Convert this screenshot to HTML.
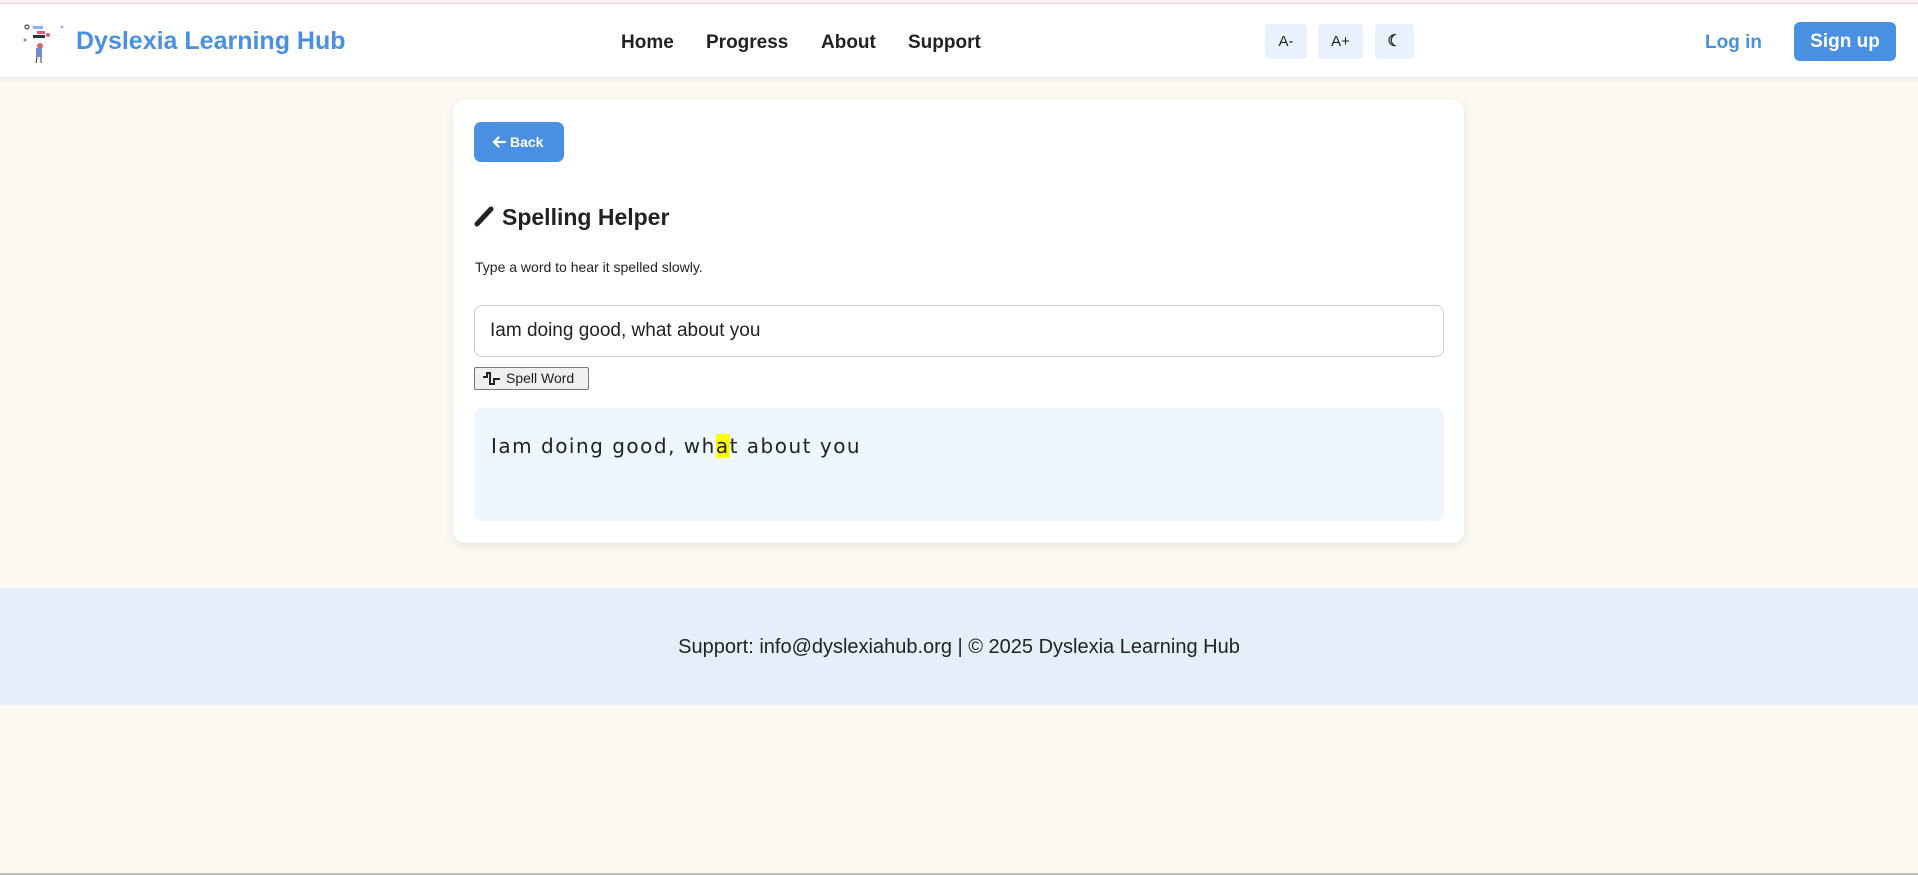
<!DOCTYPE html>
<html><head><meta charset="utf-8"><style>
*{box-sizing:border-box;margin:0;padding:0}
body{width:1918px;height:875px;background:#fdfaf4;font-family:"Liberation Sans",Arial,sans-serif;color:#222;position:relative;overflow:hidden}
.top{position:absolute;left:0;top:0;width:1918px;height:4px;background:#f8eef8;border-bottom:1px solid #eadcea}
header{position:absolute;left:0;top:5px;width:1918px;height:72px;background:#fff;box-shadow:0 2px 6px rgba(0,0,0,.08)}
.logo{position:absolute;left:76px;top:22px;font-size:25px;font-weight:bold;color:#4a90e2}
nav a{position:absolute;top:27px;font-size:19px;font-weight:bold;color:#222;text-decoration:none}
.sb{position:absolute;top:19px;height:35px;background:#e8f1fd;border-radius:4px;font-size:15px;text-align:center;line-height:35px;color:#222}
.login{position:absolute;left:1705px;top:27px;font-size:19px;font-weight:bold;color:#4a90e2}
.signup{position:absolute;left:1794px;top:17px;width:102px;height:39px;background:#4a90e2;color:#fff;border-radius:6px;font-size:19px;font-weight:bold;text-align:center;line-height:39px}
.card{position:absolute;left:453px;top:100px;width:1011px;height:443px;background:#fff;border-radius:12px;box-shadow:0 3px 10px rgba(0,0,0,.1)}
.back{position:absolute;left:21px;top:22px;width:90px;height:40px;background:#4a90e2;border-radius:7px;color:#fff;font-size:14px;font-weight:bold;line-height:40px;padding-left:36px}
h2{position:absolute;left:21px;top:104px;font-size:23px;font-weight:bold}
.desc{position:absolute;left:22px;top:159px;font-size:14px}
.inp{position:absolute;left:21px;top:205px;width:970px;height:52px;border:1px solid #ccc;border-radius:8px;font-size:19px;padding-left:15px;line-height:50px}
.spell{position:absolute;left:21px;top:267px;width:115px;height:23px;border:1px solid #777;background:#efefef;border-radius:2px;font-size:14px;line-height:21px;padding-left:31px}
.out{position:absolute;left:21px;top:308px;width:970px;height:113px;background:#eef6fe;border-radius:8px;font-family:"DejaVu Sans",sans-serif;font-size:20px;letter-spacing:1.5px;padding:26px 0 0 17px;color:#222}
.hl{background:#ffff00}
footer{position:absolute;left:0;top:588px;width:1918px;height:117px;background:#e5eff9;text-align:center;font-size:20px;line-height:119px}
.bl{position:absolute;left:0;top:873px;width:1918px;height:2px;background:#bbb}
</style></head><body>
<div class="top"></div>
<header>
<svg style="position:absolute;left:22px;top:16px" width="44" height="44" viewBox="0 0 44 44"><circle cx="5" cy="6" r="2" fill="none" stroke="#222"/><rect x="11" y="5" width="10" height="3" fill="#8fb3f0"/><rect x="15" y="10" width="8" height="3" fill="#e06070"/><rect x="11" y="14" width="12" height="3" fill="#333"/><circle cx="26" cy="14" r="2" fill="#e06070"/><circle cx="18" cy="25" r="3" fill="#e06070"/><rect x="14" y="27" width="6" height="9" fill="#6a8fd0"/><line x1="15" y1="36" x2="14" y2="42" stroke="#334"/><line x1="19" y1="36" x2="19" y2="42" stroke="#334"/><circle cx="3" cy="19" r="1.5" fill="#6a8fd0"/><circle cx="40" cy="6" r="1.5" fill="#8fb3f0"/></svg>
<div class="logo">Dyslexia Learning Hub</div>
<nav><a style="left:621px">Home</a><a style="left:706px">Progress</a><a style="left:821px">About</a><a style="left:908px">Support</a></nav>
<div class="sb" style="left:1265px;width:42px">A-</div>
<div class="sb" style="left:1318px;width:45px">A+</div>
<div class="sb" style="left:1375px;width:39px;font-size:16px;font-weight:bold">☾</div>
<div class="login">Log in</div>
<div class="signup">Sign up</div>
</header>
<div class="card">
<div class="back"><svg style="position:absolute;left:18px;top:14px" width="14" height="12" viewBox="0 0 14 12"><path d="M13 6 H2 M6.5 1.5 L2 6 L6.5 10.5" fill="none" stroke="#fff" stroke-width="2.2" stroke-linecap="round" stroke-linejoin="round"/></svg>Back</div>
<h2><svg width="22" height="22" viewBox="0 0 22 22" style="vertical-align:-2px;margin-right:6px"><path d="M3 19 L17 4" stroke="#222" stroke-width="5" stroke-linecap="round"/></svg>Spelling Helper</h2>
<div class="desc">Type a word to hear it spelled slowly.</div>
<div class="inp">Iam doing good, what about you</div>
<div class="spell"><svg style="position:absolute;left:8px;top:4px" width="18" height="14" viewBox="0 0 18 14"><path d="M0 5 H4 V1 H7 V12 H11 V7 H17" fill="none" stroke="#222" stroke-width="2"/></svg>Spell Word</div>
<div class="out">Iam doing good, wh<span class="hl">a</span>t about you</div>
</div>
<footer>Support: info@dyslexiahub.org | © 2025 Dyslexia Learning Hub</footer>
<div class="bl"></div>
</body></html>
